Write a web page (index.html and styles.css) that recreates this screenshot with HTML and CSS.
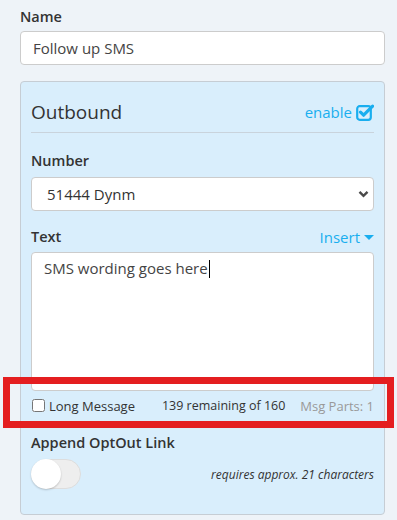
FILE: index.html
```html
<!DOCTYPE html>
<html lang="en">
<head>
    <meta charset="UTF-8">
    <meta name="viewport" content="width=device-width, initial-scale=1.0">
    <title>SMS Step</title>
    <link rel="stylesheet" href="styles.css">
</head>
<body>
    <div class="page">
        <label class="label" for="step_name">Name</label>
        <input class="input" type="text" id="step_name" value="Follow up SMS">

        <div class="panel">
            <div class="panel-head">
                <span class="panel-title">Outbound</span>
                <span class="enable">enable
                    <svg class="enable-icon" width="18" height="17" viewBox="0 0 18 17">
                        <rect x="1.2" y="2.2" width="13.6" height="13.6" rx="2.5" fill="none" stroke="#19aeef" stroke-width="2.2"/>
                        <path d="M4.5 8.2 L7.6 11.2 L16.6 2.2" fill="none" stroke="#19aeef" stroke-width="3.2" stroke-linecap="round" stroke-linejoin="round"/>
                    </svg>
                </span>
            </div>

            <label class="label number-label" for="number">Number</label>
            <div class="select-wrap">
                <select class="select" id="number">
                    <option>51444 Dynm</option>
                </select>
                <svg class="chevron" width="11" height="8" viewBox="0 0 11 8">
                    <path d="M1.5 1.8 L5.5 5.8 L9.5 1.8" fill="none" stroke="#4a4a4a" stroke-width="2.4"/>
                </svg>
            </div>

            <div class="text-head">
                <label class="label" for="sms_text">Text</label>
                <span class="insert">Insert <span class="caret"></span></span>
            </div>
            <div class="textarea">SMS wording goes here<span class="cursor"></span></div>

            <div class="counter-row">
                <label class="long-msg"><input type="checkbox"> Long Message</label>
                <span class="remaining">139 remaining of 160</span>
                <span class="parts">Msg Parts: 1</span>
            </div>

            <div class="label append-label">Append OptOut Link</div>
            <div class="append-row">
                <span class="toggle"><span class="knob"></span></span>
                <span class="hint">requires approx. 21 characters</span>
            </div>
        </div>
    </div>

    <div class="highlight"></div>
</body>
</html>
```

FILE: styles.css
```css
/* SMS step editor */
body {
    margin: 0;
    background-color: #eef3f8;
    font-family: "Open Sans", Arial, sans-serif;
    color: #333333;
}

.page {
    padding: 7px 12px 0 20px;
}

.label {
    display: block;
    font-size: 14.5px;
    line-height: 20px;
    font-weight: 600;
    color: #333333;
}

.input {
    display: block;
    box-sizing: border-box;
    width: 100%;
    height: 34px;
    margin-top: 4px;
    padding: 0 12px;
    border: 1px solid #cccccc;
    border-radius: 4px;
    background-color: #ffffff;
    font-family: inherit;
    font-size: 15px;
    color: #444444;
}

.panel {
    margin-top: 16px;
    padding: 10px 10px 25px 10px;
    border: 1px solid #c6cdd4;
    border-radius: 4px;
    background-color: #d9eefc;
}

.panel-head {
    display: flex;
    justify-content: space-between;
    align-items: center;
    height: 40px;
    border-bottom: 1px solid #c9d3dc;
}

.panel-title {
    font-size: 19px;
    color: #333333;
}

.enable {
    display: flex;
    align-items: center;
    gap: 4px;
    font-size: 15px;
    color: #19aeef;
}

.number-label {
    margin-top: 18px;
}

.select-wrap {
    position: relative;
    margin-top: 6px;
}

.select {
    display: block;
    box-sizing: border-box;
    width: 100%;
    height: 34px;
    padding: 0 15px;
    border: 1px solid #cccccc;
    border-radius: 4px;
    background-color: #ffffff;
    font-family: inherit;
    font-size: 15px;
    color: #333333;
    appearance: none;
}

.chevron {
    position: absolute;
    right: 5px;
    top: 13px;
}

.text-head {
    display: flex;
    justify-content: space-between;
    align-items: center;
    margin-top: 16px;
}

.insert {
    display: flex;
    align-items: center;
    gap: 4px;
    font-size: 15px;
    color: #19aeef;
}

.caret {
    width: 0;
    height: 0;
    border-left: 5px solid transparent;
    border-right: 5px solid transparent;
    border-top: 5px solid #19aeef;
}

.textarea {
    box-sizing: border-box;
    height: 139px;
    margin-top: 5px;
    padding: 5px 12px;
    border: 1px solid #cccccc;
    border-radius: 4px;
    background-color: #ffffff;
    font-size: 15px;
    line-height: 21px;
    color: #444444;
}

.cursor {
    display: inline-block;
    width: 1px;
    height: 18px;
    margin-left: 1px;
    vertical-align: -4px;
    background-color: #000000;
}

.counter-row {
    display: flex;
    align-items: center;
    justify-content: space-between;
    height: 29px;
    font-size: 13px;
}

.long-msg {
    display: flex;
    align-items: center;
    gap: 4px;
}

.long-msg input {
    width: 13px;
    height: 13px;
    margin: 0 0 0 1px;
}

.remaining {
    margin-left: 12px;
    font-size: 12.5px;
}

.parts {
    color: #999999;
}

.append-label {
    margin-top: 13px;
}

.append-row {
    display: flex;
    justify-content: space-between;
    align-items: center;
    margin-top: 6px;
}

.toggle {
    position: relative;
    box-sizing: border-box;
    width: 50px;
    height: 30px;
    border: 1px solid #dddddd;
    border-radius: 15px;
    background-color: #eeeeee;
}

.knob {
    position: absolute;
    left: -1px;
    top: -1px;
    width: 30px;
    height: 30px;
    border-radius: 50%;
    background-color: #ffffff;
    box-shadow: 0 1px 2px rgba(0, 0, 0, 0.2);
}

.hint {
    font-size: 12px;
    font-style: italic;
    color: #333333;
}

/* annotation frame around the counter row */
.highlight {
    position: absolute;
    left: 3px;
    top: 377px;
    width: 391px;
    height: 51px;
    box-sizing: border-box;
    border: 7px solid #e41e20;
}
```
